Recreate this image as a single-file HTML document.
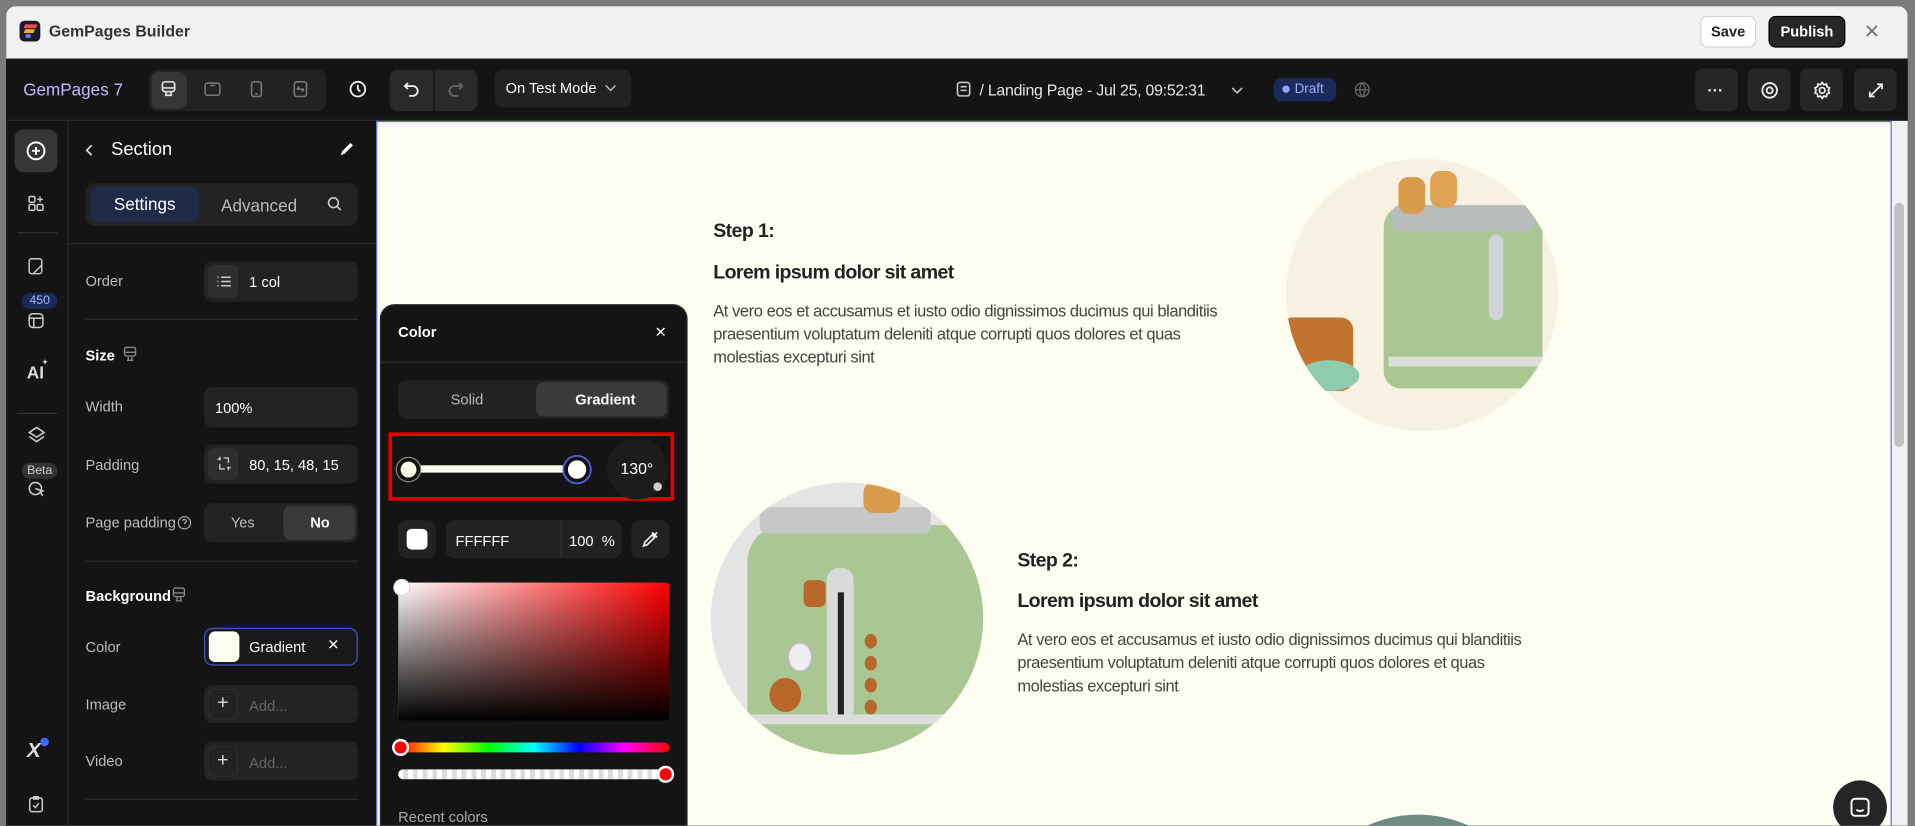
<!DOCTYPE html>
<html><head><meta charset="utf-8"><style>
*{box-sizing:border-box;margin:0;padding:0}
html,body{width:1915px;height:825px;overflow:hidden;background:#7b7b7b;font-family:"Liberation Sans",sans-serif}
#s{position:absolute;left:0;top:0;width:1568px;height:676px;transform:scale(1.22130);transform-origin:0 0;background:#7b7b7b;overflow:hidden}
.a{position:absolute}
.t{color:#fff;font-size:12px;white-space:nowrap}
.lbl{color:#bdbdbd;font-size:12px;position:absolute;left:70px}
.inp{position:absolute;left:167px;width:126px;background:#232323;border-radius:7px}
.ib{position:absolute;left:3px;top:3px;width:25px;background:#2e2e2e;border-radius:5px}
.div{position:absolute;height:1px;background:#2c2c2c}
.rb{position:absolute;top:56px;width:35px;height:35px;background:#262626;border-radius:6px}
.cv{font-family:"Liberation Sans Narrow","Liberation Sans",sans-serif;color:#222;white-space:nowrap}
.h{font-size:16px;font-weight:bold;letter-spacing:-0.5px}
.p{font-size:13.5px;line-height:19px;color:#444;letter-spacing:-0.35px}
</style></head><body><div id="s">
<div class="a" style="left:5px;top:5px;width:1557px;height:720px;background:#141414;border-radius:8px 8px 0 0;overflow:hidden">
 <div class="a" style="left:0;top:0;width:1557px;height:43px;background:#f2f2f2"></div>
</div>
<div class="a" style="left:16px;top:17px;width:17px;height:17px;background:#1b1b2a;border-radius:4px;overflow:hidden">
 <div class="a" style="left:4px;top:3px;width:10px;height:3px;background:#ff4d4d;transform:skewX(-20deg)"></div>
 <div class="a" style="left:4px;top:7px;width:8px;height:3px;background:#ffb020;transform:skewX(-20deg)"></div>
 <div class="a" style="left:5px;top:11px;width:4px;height:3px;background:#6a7bff"></div>
</div>
<div class="a" style="left:40px;top:18px;font-size:13px;font-weight:bold;color:#333">GemPages Builder</div>
<div class="a" style="left:1392px;top:13px;width:46px;height:26px;background:#fff;border:1px solid #d6d6d6;border-radius:6px;font-size:12px;font-weight:bold;color:#222;text-align:center;line-height:24px">Save</div>
<div class="a" style="left:1448px;top:13px;width:63px;height:26px;background:#262626;border:1px solid #000;border-radius:6px;font-size:12px;font-weight:bold;color:#fff;text-align:center;line-height:24px">Publish</div>
<div class="a" style="left:1526px;top:16px;font-size:16px;color:#777">✕</div>
<div class="a" style="left:5px;top:48px;width:1557px;height:51px;background:#141414;border-bottom:1px solid #2a2a2a"></div>
<div class="a" style="left:19px;top:65px;font-size:14px;color:#c7b6ff">GemPages 7</div>
<div class="a" style="left:122px;top:57px;width:145px;height:34px;background:#222;border-radius:7px"></div>
<div class="a" style="left:124px;top:59px;width:29px;height:30px;background:#363636;border-radius:6px"></div>
<svg class="a" style="left:130px;top:65px" width="16" height="16" viewBox="0 0 16 16" fill="none" stroke="#ddd" stroke-width="1.4"><rect x="3" y="2" width="10" height="8" rx="2"/><path d="M3 7h10M6 10v3M10 10v3M5 13h6"/></svg>
<svg class="a" style="left:166px;top:65px" width="16" height="16" viewBox="0 0 16 16" fill="none" stroke="#777" stroke-width="1.3"><rect x="2" y="3" width="12" height="10" rx="2"/><path d="M6 5h4"/></svg>
<svg class="a" style="left:202px;top:65px" width="16" height="16" viewBox="0 0 16 16" fill="none" stroke="#777" stroke-width="1.3"><rect x="4" y="2" width="8" height="12" rx="2"/><path d="M7 12h2"/></svg>
<svg class="a" style="left:238px;top:65px" width="16" height="16" viewBox="0 0 16 16" fill="none" stroke="#777" stroke-width="1.3"><rect x="3" y="2" width="10" height="12" rx="2"/><path d="M5 8h6M5 8l2-2M11 8l-2 2"/></svg>
<svg class="a" style="left:285px;top:65px" width="16" height="16" viewBox="0 0 16 16" fill="none" stroke="#eee" stroke-width="1.5"><circle cx="8" cy="8" r="6"/><path d="M8 4.5V8l2 2"/></svg>
<div class="a" style="left:319px;top:57px;width:72px;height:34px;background:#2a2a2a;border-radius:7px"></div>
<div class="a" style="left:355px;top:57px;width:1px;height:34px;background:#111"></div>
<svg class="a" style="left:329px;top:65px" width="16" height="16" viewBox="0 0 16 16" fill="none" stroke="#eee" stroke-width="1.5"><path d="M5 3L2.5 5.5 5 8M3 5.5h6a4 4 0 010 8H6"/></svg>
<svg class="a" style="left:365px;top:65px" width="16" height="16" viewBox="0 0 16 16" fill="none" stroke="#666" stroke-width="1.5"><path d="M11 3l2.5 2.5L11 8M13 5.5H7a4 4 0 000 8h3"/></svg>
<div class="a" style="left:405px;top:57px;width:112px;height:31px;background:#222;border-radius:7px"></div>
<div class="a t" style="left:414px;top:65px">On Test Mode</div>
<svg class="a" style="left:494px;top:67px" width="12" height="10" viewBox="0 0 12 10" fill="none" stroke="#bbb" stroke-width="1.2"><path d="M2 3l4 4 4-4"/></svg>
<svg class="a" style="left:782px;top:66px" width="14" height="14" viewBox="0 0 14 14" fill="none" stroke="#ccc" stroke-width="1.3"><rect x="2" y="1.5" width="10" height="11" rx="2"/><path d="M4.5 5h5M4.5 8h5"/></svg>
<div class="a" style="left:802px;top:66px;font-size:13px;color:#e6e6e6;letter-spacing:-0.2px">/ Landing Page - Jul 25, 09:52:31</div>
<svg class="a" style="left:1007px;top:69px" width="12" height="10" viewBox="0 0 12 10" fill="none" stroke="#ccc" stroke-width="1.2"><path d="M2 3l4 4 4-4"/></svg>
<div class="a" style="left:1043px;top:64px;width:51px;height:19px;background:#1c2a5a;border-radius:6px"></div>
<div class="a" style="left:1050px;top:70px;width:6px;height:6px;background:#8fa6ff;border-radius:50%"></div>
<div class="a" style="left:1060px;top:67px;font-size:11px;color:#9db0ff">Draft</div>
<svg class="a" style="left:1108px;top:66px" width="15" height="15" viewBox="0 0 16 16" fill="none" stroke="#666" stroke-width="1.2"><circle cx="8" cy="8" r="6"/><path d="M2 8h12M8 2c-3 3-3 9 0 12M8 2c3 3 3 9 0 12"/></svg>
<div class="rb" style="left:1388px"></div><div class="rb" style="left:1431px"></div><div class="rb" style="left:1474px"></div><div class="rb" style="left:1518px"></div>
<div class="a" style="left:1398px;top:66px;color:#eee;font-size:13px;font-weight:bold">···</div>
<svg class="a" style="left:1441px;top:66px" width="16" height="16" viewBox="0 0 16 16" fill="none" stroke="#eee" stroke-width="1.5"><circle cx="8" cy="8" r="6"/><circle cx="8" cy="8" r="2.5"/></svg>
<svg class="a" style="left:1484px;top:66px" width="16" height="16" viewBox="0 0 16 16" fill="none" stroke="#eee" stroke-width="1.4"><circle cx="8" cy="8" r="2.3"/><path d="M8 1.5l1.3 1.8 2.2-.5.4 2.2 2 1-.9 2 .9 2-2 1-.4 2.2-2.2-.5L8 14.5l-1.3-1.8-2.2.5-.4-2.2-2-1 .9-2-.9-2 2-1 .4-2.2 2.2.5z"/></svg>
<svg class="a" style="left:1528px;top:66px" width="16" height="16" viewBox="0 0 16 16" fill="none" stroke="#eee" stroke-width="1.5"><path d="M3 13l10-10M9 3h4v4M3 9v4h4"/></svg>
<div class="a" style="left:55px;top:99px;width:1px;height:620px;background:#2a2a2a"></div>
<div class="a" style="left:12px;top:106px;width:35px;height:35px;background:#363636;border-radius:7px"></div>
<svg class="a" style="left:21px;top:115px" width="17" height="17" viewBox="0 0 16 16" fill="none" stroke="#fff" stroke-width="1.5"><circle cx="8" cy="8" r="6.5"/><path d="M8 5v6M5 8h6"/></svg>
<svg class="a" style="left:22px;top:159px" width="15" height="15" viewBox="0 0 16 16" fill="none" stroke="#ccc" stroke-width="1.3"><rect x="2" y="2" width="5" height="5" rx="1"/><rect x="2" y="9" width="5" height="5" rx="1"/><rect x="9" y="9" width="5" height="5" rx="1"/><path d="M11.5 2v5M9 4.5h5"/></svg>
<div class="a" style="left:14px;top:190px;width:33px;height:1px;background:#333"></div>
<svg class="a" style="left:22px;top:210px" width="15" height="16" viewBox="0 0 16 16" fill="none" stroke="#ccc" stroke-width="1.3"><rect x="2" y="1.5" width="11" height="13" rx="2"/><path d="M6 14l7-7"/></svg>
<div class="a" style="left:18px;top:240px;width:29px;height:13px;background:#1c2a5a;border-radius:7px;font-size:10px;color:#a6b6ff;text-align:center;line-height:13px">450</div>
<svg class="a" style="left:22px;top:255px" width="15" height="15" viewBox="0 0 16 16" fill="none" stroke="#ccc" stroke-width="1.3"><rect x="2" y="2" width="12" height="12" rx="3"/><path d="M2 6h12M6 6v8"/></svg>
<div class="a" style="left:22px;top:297px;font-size:14px;font-weight:bold;color:#ddd">AI</div><div class="a" style="left:34px;top:293px;font-size:7px;color:#ddd">✦</div>
<div class="a" style="left:14px;top:338px;width:33px;height:1px;background:#333"></div>
<svg class="a" style="left:22px;top:348px" width="16" height="16" viewBox="0 0 16 16" fill="none" stroke="#ccc" stroke-width="1.3"><path d="M8 2l6 4-6 4-6-4z"/><path d="M2 9.5l6 4 6-4"/></svg>
<div class="a" style="left:18px;top:379px;width:29px;height:13px;background:#333;border-radius:7px;font-size:10px;color:#ccc;text-align:center;line-height:13px">Beta</div>
<svg class="a" style="left:22px;top:393px" width="16" height="16" viewBox="0 0 16 16" fill="none" stroke="#ccc" stroke-width="1.3"><circle cx="7" cy="7" r="5"/><path d="M7 7l6 2-2 1 2 3"/></svg>
<div class="a" style="left:22px;top:605px;font-size:17px;font-weight:bold;color:#ddd;font-style:italic">X</div>
<div class="a" style="left:33px;top:604px;width:7px;height:7px;background:#3b6bff;border-radius:50%"></div>
<svg class="a" style="left:22px;top:650px" width="15" height="16" viewBox="0 0 16 16" fill="none" stroke="#ccc" stroke-width="1.3"><rect x="2.5" y="3" width="11" height="12" rx="2"/><path d="M6 2h4v2H6zM5.5 9.5l2 2 3-4"/></svg>
<svg class="a" style="left:66px;top:116px" width="14" height="14" viewBox="0 0 14 14" fill="none" stroke="#ddd" stroke-width="1.4"><path d="M9 3L5 7l4 4"/></svg>
<div class="a" style="left:91px;top:114px;font-size:15px;color:#fff">Section</div>
<svg class="a" style="left:276px;top:114px" width="16" height="16" viewBox="0 0 16 16"><path d="M3 13l1-3 7-7 2 2-7 7z" fill="#fff"/></svg>
<div class="a" style="left:70px;top:150px;width:223px;height:35px;background:#232323;border-radius:7px"></div>
<div class="a" style="left:74px;top:153px;width:89px;height:29px;background:#1f2a47;border-radius:6px;color:#fff;font-size:14px;text-align:center;line-height:29px">Settings</div>
<div class="a" style="left:181px;top:160px;font-size:14px;color:#bbb">Advanced</div>
<svg class="a" style="left:267px;top:160px" width="14" height="14" viewBox="0 0 14 14" fill="none" stroke="#ccc" stroke-width="1.3"><circle cx="6" cy="6" r="4"/><path d="M9 9l3 3"/></svg>
<div class="div" style="left:56px;top:199px;width:252px"></div>
<div class="lbl" style="top:223px">Order</div>
<div class="inp" style="top:214px;height:33px"><div class="ib" style="height:27px"></div></div>
<svg class="a" style="left:177px;top:224px" width="13" height="13" viewBox="0 0 13 13" fill="none" stroke="#ccc" stroke-width="1.2"><path d="M1 3h1M4 3h8M1 6.5h1M4 6.5h8M1 10h1M4 10h8"/></svg>
<div class="a t" style="left:204px;top:224px">1 col</div>
<div class="div" style="left:70px;top:261px;width:223px"></div>
<div class="a" style="left:70px;top:284px;font-size:12px;font-weight:bold;color:#fff">Size</div>
<svg class="a" style="left:100px;top:283px" width="13" height="14" viewBox="0 0 13 14" fill="none" stroke="#888" stroke-width="1.1"><rect x="2" y="1.5" width="9" height="7" rx="1.5"/><path d="M2 5.5h9M5 9v2.5M8 9v2.5M4 12h5"/></svg>
<div class="lbl" style="top:326px">Width</div>
<div class="inp" style="top:317px;height:33px"></div>
<div class="a t" style="left:176px;top:327px">100%</div>
<div class="lbl" style="top:374px">Padding</div>
<div class="inp" style="top:364px;height:32px"><div class="ib" style="height:26px"></div></div>
<svg class="a" style="left:177px;top:373px" width="13" height="13" viewBox="0 0 13 13" fill="none" stroke="#ccc" stroke-width="1.1"><path d="M3 1v3M1 3h3M10 12V9M12 10H9M6 2h4v4M7 11H3V7"/></svg>
<div class="a t" style="left:204px;top:374px">80, 15, 48, 15</div>
<div class="lbl" style="top:421px">Page padding</div>
<svg class="a" style="left:145px;top:422px" width="12" height="12" viewBox="0 0 12 12" fill="none" stroke="#aaa" stroke-width="1"><circle cx="6" cy="6" r="5"/><path d="M4.5 4.6a1.5 1.5 0 113 .4c0 1-1.5 1-1.5 2M6 8.5v.5"/></svg>
<div class="inp" style="top:412px;height:32px"></div>
<div class="a" style="left:232px;top:414px;width:59px;height:28px;background:#3a3a3a;border-radius:6px"></div>
<div class="a" style="left:189px;top:421px;font-size:12px;color:#bbb">Yes</div>
<div class="a" style="left:254px;top:421px;font-size:12px;font-weight:bold;color:#fff">No</div>
<div class="div" style="left:70px;top:459px;width:223px"></div>
<div class="a" style="left:70px;top:481px;font-size:12px;font-weight:bold;color:#fff">Background</div>
<svg class="a" style="left:140px;top:480px" width="13" height="14" viewBox="0 0 13 14" fill="none" stroke="#888" stroke-width="1.1"><rect x="2" y="1.5" width="9" height="7" rx="1.5"/><path d="M2 5.5h9M5 9v2.5M8 9v2.5M4 12h5"/></svg>
<div class="lbl" style="top:523px">Color</div>
<div class="a" style="left:167px;top:514px;width:126px;height:31px;background:#1a1a1a;border:1px solid #3e57c4;border-radius:7px"></div>
<div class="a" style="left:171px;top:517px;width:25px;height:25px;background:#fdfdf0;border-radius:5px"></div>
<div class="a t" style="left:204px;top:523px">Gradient</div>
<div class="a" style="left:268px;top:521px;font-size:12px;color:#fff">✕</div>
<div class="lbl" style="top:570px">Image</div>
<div class="inp" style="top:561px;height:31px"></div>
<div class="a" style="left:170px;top:564px;width:25px;height:25px;border:1px solid #2e2e2e;border-radius:5px;color:#ddd;text-align:center;line-height:22px;font-size:16px">+</div>
<div class="a" style="left:204px;top:571px;font-size:12px;color:#666">Add...</div>
<div class="lbl" style="top:616px">Video</div>
<div class="inp" style="top:607px;height:32px"></div>
<div class="a" style="left:170px;top:611px;width:25px;height:25px;border:1px solid #2e2e2e;border-radius:5px;color:#ddd;text-align:center;line-height:22px;font-size:16px">+</div>
<div class="a" style="left:204px;top:618px;font-size:12px;color:#666">Add...</div>
<div class="div" style="left:70px;top:654px;width:223px"></div>
<div class="a" style="left:308px;top:99px;width:1241px;height:620px;background:#fdfdf1;border-left:1px solid #5570d8;border-right:1px solid #5570d8;overflow:hidden">
 <div class="a" style="left:-1px;top:0;width:1241px;height:1px;background:#5570d8"></div>
 <div class="a cv h" style="left:275px;top:82px">Step 1:</div>
 <div class="a cv h" style="left:275px;top:116px">Lorem ipsum dolor sit amet</div>
 <div class="a cv p" style="left:275px;top:146px">At vero eos et accusamus et iusto odio dignissimos ducimus qui blanditiis<br>praesentium voluptatum deleniti atque corrupti quos dolores et quas<br>molestias excepturi sint</div>
 <div class="a" style="left:744px;top:31px;width:223px;height:223px;border-radius:50%;background:#f6f1e1;overflow:hidden">
  <div class="a" style="left:80px;top:38px;width:130px;height:150px;background:#a9c792;border-radius:18px 18px 14px 14px"></div>
  <div class="a" style="left:86px;top:38px;width:118px;height:22px;background:#b9bcbc;border-radius:8px"></div>
  <div class="a" style="left:92px;top:15px;width:22px;height:30px;background:#d89b4a;border-radius:8px"></div>
  <div class="a" style="left:118px;top:10px;width:22px;height:30px;background:#dfa355;border-radius:8px"></div>
  <div class="a" style="left:166px;top:62px;width:12px;height:70px;background:#cfd3d3;border-radius:6px"></div>
  <div class="a" style="left:84px;top:162px;width:126px;height:8px;background:#ddd"></div>
  <div class="a" style="left:-5px;top:130px;width:60px;height:60px;background:#c0742e;border-radius:10px"></div>
  <div class="a" style="left:10px;top:165px;width:50px;height:25px;background:#8fcbae;border-radius:50%"></div>
 </div>
 <div class="a" style="left:273px;top:296px;width:223px;height:223px;border-radius:50%;background:#e4e4e2;overflow:hidden">
  <div class="a" style="left:30px;top:35px;width:200px;height:200px;background:#a9c792;border-radius:30px"></div>
  <div class="a" style="left:40px;top:20px;width:140px;height:22px;background:#c6c8c8;border-radius:6px"></div>
  <div class="a" style="left:125px;top:0;width:30px;height:25px;background:#d89b4a;border-radius:8px"></div>
  <div class="a" style="left:95px;top:70px;width:22px;height:125px;background:#d8dbda;border-radius:10px"></div>
  <div class="a" style="left:104px;top:90px;width:5px;height:100px;background:#222"></div>
  <div class="a" style="left:76px;top:80px;width:18px;height:22px;background:#b8662a;border-radius:5px"></div>
  <div class="a" style="left:62px;top:130px;width:22px;height:26px;background:#eee;border:2px solid #bbb;border-radius:50%"></div>
  <div class="a" style="left:48px;top:160px;width:26px;height:28px;background:#b8662a;border-radius:50%"></div>
  <div class="a" style="left:126px;top:124px;width:10px;height:12px;background:#b8662a;border-radius:50%;box-shadow:0 18px 0 #b8662a,0 36px 0 #b8662a,0 54px 0 #b8662a"></div>
  <div class="a" style="left:30px;top:190px;width:200px;height:8px;background:#ddd"></div>
 </div>
 <div class="a cv h" style="left:524px;top:352px">Step 2:</div>
 <div class="a cv h" style="left:524px;top:385px">Lorem ipsum dolor sit amet</div>
 <div class="a cv p" style="left:524px;top:415px">At vero eos et accusamus et iusto odio dignissimos ducimus qui blanditiis<br>praesentium voluptatum deleniti atque corrupti quos dolores et quas<br>molestias excepturi sint</div>
 <div class="a" style="left:752px;top:568px;width:200px;height:200px;border-radius:50%;background:#6e8c83"></div>
 <div class="a" style="left:1192px;top:540px;width:44px;height:44px;border-radius:50%;background:#252525"></div>
 <svg class="a" style="left:1204px;top:552px" width="20" height="20" viewBox="0 0 20 20" fill="none" stroke="#fff" stroke-width="1.6"><rect x="3" y="3" width="14" height="14" rx="3"/><path d="M7 12c2 1.5 4 1.5 6 0"/></svg>
</div>
<div class="a" style="left:1549px;top:99px;width:13px;height:620px;background:#f1f1f1"></div>
<div class="a" style="left:1551px;top:166px;width:8px;height:200px;background:#c1c1c1;border-radius:4px"></div>
<div class="a" style="left:311px;top:249px;width:252px;height:460px;background:#141414;border-radius:12px;border:1px solid #2a2a2a"></div>
<div class="a" style="left:326px;top:265px;font-size:12px;font-weight:bold;color:#fff">Color</div>
<div class="a" style="left:536px;top:265px;font-size:12px;color:#fff">✕</div>
<div class="a" style="left:312px;top:296px;width:250px;height:1px;background:#2c2c2c"></div>
<div class="a" style="left:326px;top:311px;width:222px;height:32px;background:#222;border-radius:7px"></div>
<div class="a" style="left:439px;top:313px;width:107px;height:28px;background:#3a3a3a;border-radius:6px"></div>
<div class="a" style="left:369px;top:320px;font-size:12px;color:#bbb">Solid</div>
<div class="a" style="left:471px;top:320px;font-size:12px;font-weight:bold;color:#fff">Gradient</div>
<div class="a" style="left:318px;top:354px;width:234px;height:56px;border:3px solid #e50000"></div>
<div class="a" style="left:334px;top:381px;width:138px;height:6px;background:#fdfdec"></div>
<div class="a" style="left:325px;top:375px;width:19px;height:19px;border-radius:50%;background:#fbf8e6;border:3px solid #111;box-shadow:0 0 0 1px #888"></div>
<div class="a" style="left:462px;top:374px;width:21px;height:21px;border-radius:50%;background:#fff;border:3px solid #111;box-shadow:0 0 0 1.5px #4c63d8"></div>
<div class="a" style="left:497px;top:359px;width:50px;height:50px;border-radius:50%;background:#1c1c1c"></div>
<div class="a" style="left:508px;top:376px;font-size:13px;color:#fff">130°</div>
<div class="a" style="left:535px;top:395px;width:7px;height:7px;border-radius:50%;background:#ccc"></div>
<div class="a" style="left:326px;top:426px;width:31px;height:31px;background:#222;border-radius:7px"></div>
<div class="a" style="left:333px;top:433px;width:17px;height:17px;background:#fff;border-radius:4px"></div>
<div class="a" style="left:365px;top:426px;width:144px;height:31px;background:#222;border-radius:7px"></div>
<div class="a" style="left:459px;top:426px;width:1px;height:31px;background:#333"></div>
<div class="a t" style="left:373px;top:436px">FFFFFF</div>
<div class="a t" style="left:466px;top:436px">100&nbsp;&nbsp;%</div>
<div class="a" style="left:517px;top:426px;width:31px;height:31px;background:#222;border-radius:7px"></div>
<svg class="a" style="left:525px;top:434px" width="15" height="15" viewBox="0 0 15 15" fill="none" stroke="#eee" stroke-width="1.4"><path d="M2 13l1-3 6-6 2 2-6 6zM9 2l4 4M11 4l2-2"/></svg>
<div class="a" style="left:326px;top:477px;width:222px;height:113px;border-radius:3px;background:linear-gradient(to bottom,rgba(0,0,0,0),#000),linear-gradient(to right,#fff,#f00)"></div>
<div class="a" style="left:322px;top:474px;width:14px;height:14px;border-radius:50%;background:#fff;border:1px solid #ddd"></div>
<div class="a" style="left:326px;top:608px;width:222px;height:8px;border-radius:4px;background:linear-gradient(to right,#f00,#ff0,#0f0,#0ff,#00f,#f0f,#f00)"></div>
<div class="a" style="left:321px;top:605px;width:14px;height:14px;border-radius:50%;background:#f00;border:2px solid #fff"></div>
<div class="a" style="left:326px;top:630px;width:222px;height:8px;border-radius:4px;background:repeating-linear-gradient(90deg,#fff 0 4px,#ddd 4px 8px)"></div>
<div class="a" style="left:538px;top:627px;width:14px;height:14px;border-radius:50%;background:#f00;border:2px solid #fff"></div>
<div class="a" style="left:326px;top:662px;font-size:12px;color:#aaa">Recent colors</div>
</div></body></html>
